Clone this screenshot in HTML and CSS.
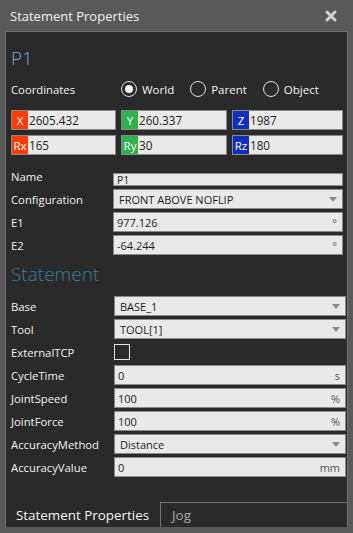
FILE: index.html
```html
<!DOCTYPE html>
<html>

<head>
	<title>Statement Properties</title>
	<meta charset="UTF-8">
	<link rel="stylesheet" href="styles.css">
	<meta name="viewport" content="width=device-width, initial-scale=1">
</head>

<body>
	<div class="window">
		<div class="titlebar">
			<span class="title">Statement Properties</span>
			<svg class="close" width="12" height="12" viewBox="0 0 12 12">
				<path d="M2 2 L10 10 M10 2 L2 10" stroke="#d0d0d0" stroke-width="3" stroke-linecap="round" />
			</svg>
		</div>

		<div class="panel">
			<div class="heading point">P1</div>

			<div class="coords">
				<span class="label">Coordinates</span>
				<div class="radios">
					<span class="radio checked"><span class="circle"></span>World</span>
					<span class="radio"><span class="circle"></span>Parent</span>
					<span class="radio"><span class="circle"></span>Object</span>
				</div>
			</div>

			<div class="xyz">
				<div class="axis"><span class="tag red">X</span><span class="val">2605.432</span></div>
				<div class="axis"><span class="tag green">Y</span><span class="val">260.337</span></div>
				<div class="axis"><span class="tag blue">Z</span><span class="val">1987</span></div>
				<div class="axis"><span class="tag red">Rx</span><span class="val">165</span></div>
				<div class="axis"><span class="tag green">Ry</span><span class="val">30</span></div>
				<div class="axis"><span class="tag blue">Rz</span><span class="val">180</span></div>
			</div>

			<div class="props">
				<span class="label">Name</span>
				<div class="field short">P1</div>
				<span class="label">Configuration</span>
				<div class="field select">FRONT ABOVE NOFLIP<span class="arrow"></span></div>
				<span class="label">E1</span>
				<div class="field">977.126<span class="unit">°</span></div>
				<span class="label">E2</span>
				<div class="field">-64.244<span class="unit">°</span></div>
			</div>

			<div class="heading section">Statement</div>

			<div class="props wide">
				<span class="label">Base</span>
				<div class="field select">BASE_1<span class="arrow"></span></div>
				<span class="label">Tool</span>
				<div class="field select">TOOL[1]<span class="arrow"></span></div>
				<span class="label">ExternalTCP</span>
				<div class="check-cell"><span class="checkbox"></span></div>
				<span class="label">CycleTime</span>
				<div class="field">0<span class="unit">s</span></div>
				<span class="label">JointSpeed</span>
				<div class="field">100<span class="unit">%</span></div>
				<span class="label">JointForce</span>
				<div class="field">100<span class="unit">%</span></div>
				<span class="label">AccuracyMethod</span>
				<div class="field select">Distance<span class="arrow"></span></div>
				<span class="label">AccuracyValue</span>
				<div class="field">0<span class="unit">mm</span></div>
			</div>
		</div>

		<div class="tabs">
			<div class="tab active">Statement Properties</div>
			<div class="tab">Jog</div>
		</div>
	</div>
</body>

</html>
```
FILE: styles.css
```css
body {
	margin: 0;
	background-color: #595959;
	font-family: "Open Sans", "Noto Sans", sans-serif;
}

.window {
	width: 353px;
	height: 533px;
	display: flex;
	flex-direction: column;
}

.titlebar {
	height: 31px;
	flex: none;
	display: flex;
	align-items: center;
	justify-content: space-between;
	padding: 0 16px 0 10px;
	color: #f2f2f2;
	font-size: 13px;
}

.close {
	display: block;
}

.panel {
	height: 471px;
	flex: none;
	box-sizing: border-box;
	margin: 0 5px;
	padding: 14px 4px 0 5px;
	border: 1px solid #727272;
	border-bottom: none;
	background-color: #2a2a2a;
}

.heading {
	font-size: 19px;
	line-height: 24px;
	font-weight: 300;
}

.point {
	color: #72acd0;
}

.section {
	margin-top: 7px;
	color: #3b7c9c;
}

.label {
	color: #f2f2f2;
	font-size: 11.3px;
	white-space: nowrap;
}

.coords {
	height: 20px;
	margin-top: 9px;
	display: flex;
	align-items: center;
}

.coords .label {
	width: 110px;
}

.radios {
	display: flex;
	gap: 16px;
}

.radio {
	display: flex;
	align-items: center;
	gap: 5px;
	color: #f2f2f2;
	font-size: 11.5px;
}

.circle {
	width: 14px;
	height: 14px;
	border: 1px solid #e0e0e0;
	border-radius: 50%;
	position: relative;
}

.radio.checked .circle::after {
	content: "";
	position: absolute;
	left: 3px;
	top: 3px;
	width: 8px;
	height: 8px;
	border-radius: 50%;
	background-color: #f2f2f2;
}

.xyz {
	margin-top: 11px;
	display: grid;
	grid-template-columns: 105px 106px 1fr;
	grid-auto-rows: 20px;
	column-gap: 5px;
	row-gap: 5px;
}

.axis {
	display: flex;
	border: 1px solid #8a8a8a;
	background-color: #e9e9e9;
	color: #1c1c1c;
	font-size: 11.7px;
}

.tag {
	width: 16px;
	display: flex;
	align-items: center;
	justify-content: center;
	color: #ffffff;
	font-size: 11.5px;
}

.tag.red {
	background-color: #ff3c0a;
}

.tag.green {
	background-color: #2fb14c;
}

.tag.blue {
	background-color: #0f2fbf;
}

.val {
	display: flex;
	align-items: center;
	padding-left: 1px;
}

.props {
	margin-top: 11px;
	display: grid;
	grid-template-columns: 102px 1fr;
	grid-auto-rows: 20px;
	row-gap: 3px;
	align-items: center;
}

.props.wide {
	margin-top: 10px;
	margin-right: -3px;
	grid-template-columns: 103px 1fr;
}

.field {
	height: 20px;
	box-sizing: border-box;
	display: flex;
	align-items: center;
	justify-content: space-between;
	padding: 0 5px 0 3px;
	border: 1px solid #8a8a8a;
	background-color: #e9e9e9;
	color: #1c1c1c;
	font-size: 11px;
}

.field.short {
	height: 13px;
	align-self: end;
	font-size: 10.5px;
}

.field.select {
	padding-left: 5px;
}

.unit {
	color: #555555;
}

.arrow {
	width: 0;
	height: 0;
	border-left: 4px solid transparent;
	border-right: 4px solid transparent;
	border-top: 5px solid #8c8c8c;
}

.check-cell {
	display: flex;
	align-items: center;
}

.checkbox {
	width: 14px;
	height: 14px;
	border: 1px solid #e6e6e6;
}

.tabs {
	height: 25px;
	flex: none;
	margin: 0 5px;
	display: flex;
}

.tab {
	box-sizing: border-box;
	display: flex;
	align-items: center;
	font-size: 13.4px;
	background-color: #2a2a2a;
}

.tab.active {
	width: 155px;
	padding-left: 10px;
	border-left: 1px solid #727272;
	color: #f5f5f5;
}

.tab:not(.active) {
	flex: 1;
	padding-left: 11px;
	border: 1px solid #727272;
	border-bottom: none;
	color: #a8a8a8;
}
```
